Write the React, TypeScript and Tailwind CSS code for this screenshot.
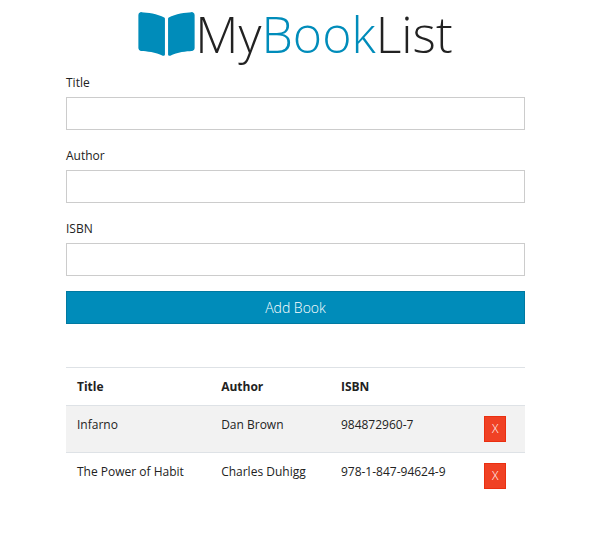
import { useState, type FormEvent } from "react";
import { FaBookOpen } from "react-icons/fa";

type Book = { title: string; author: string; isbn: string };

const initialBooks: Book[] = [
  { title: "Infarno", author: "Dan Brown", isbn: "984872960-7" },
  { title: "The Power of Habit", author: "Charles Duhigg", isbn: "978-1-847-94624-9" },
];

const emptyBook: Book = { title: "", author: "", isbn: "" };

type FieldProps = { id: string; label: string; value: string; onChange: (value: string) => void };

function Field({ id, label, value, onChange }: FieldProps) {
  return (
    <div>
      <label htmlFor={id} className="mb-1 block leading-5">
        {label}
      </label>
      <input
        id={id}
        type="text"
        value={value}
        onChange={(event) => onChange(event.target.value)}
        className="block h-[33px] w-full border border-[#ccc] bg-white px-3 outline-none focus:border-[#3bceff]"
      />
    </div>
  );
}

export default function App() {
  const [books, setBooks] = useState(initialBooks);
  const [draft, setDraft] = useState(emptyBook);

  const addBook = (event: FormEvent) => {
    event.preventDefault();
    if (!draft.title || !draft.author || !draft.isbn) return;
    setBooks([...books, draft]);
    setDraft(emptyBook);
  };

  return (
    <main className="mx-auto w-full max-w-[490px] pt-1 pr-[18px] pl-[13px] font-['Open_Sans',sans-serif] text-xs text-[#222]">
      <h1 className="mb-[9px] flex items-center justify-center text-[50px] leading-[60px] font-light">
        <FaBookOpen className="h-[50px] w-[57px] text-[#008cba]" aria-hidden="true" />
        <span>
          My<span className="text-[#008cba]">Book</span>List
        </span>
      </h1>

      <form onSubmit={addBook}>
        <div className="flex flex-col gap-4">
          <Field id="title" label="Title" value={draft.title} onChange={(title) => setDraft({ ...draft, title })} />
          <Field id="author" label="Author" value={draft.author} onChange={(author) => setDraft({ ...draft, author })} />
          <Field id="isbn" label="ISBN" value={draft.isbn} onChange={(isbn) => setDraft({ ...draft, isbn })} />
        </div>
        <button
          type="submit"
          className="mt-[15px] block h-[33px] w-full border border-[#0079a1] bg-[#008cba] text-sm font-light text-white"
        >
          Add Book
        </button>
      </form>

      <table className="mt-[43px] w-full table-fixed border-collapse text-left leading-[19px]">
        <colgroup>
          <col className="w-[31.4%]" />
          <col className="w-[26.1%]" />
          <col className="w-[31.2%]" />
          <col />
        </colgroup>
        <thead>
          <tr className="h-[38px] border-t border-[#dee2e6]">
            <th className="px-[11px] font-bold">Title</th>
            <th className="px-[11px] font-bold">Author</th>
            <th className="px-[11px] font-bold">ISBN</th>
            <th aria-label="Remove" />
          </tr>
        </thead>
        <tbody>
          {books.map((book, index) => (
            <tr key={index} className="h-[47px] border-t border-[#dee2e6] align-top odd:bg-[#f2f2f2]">
              <td className="px-[11px] pt-[9px]">{book.title}</td>
              <td className="px-[11px] pt-[9px]">{book.author}</td>
              <td className="px-[11px] pt-[9px]">{book.isbn}</td>
              <td className="px-[11px] pt-2.5">
                <button
                  type="button"
                  aria-label={`Remove ${book.title}`}
                  onClick={() => setBooks(books.filter((_, i) => i !== index))}
                  className="block h-[26px] w-[22px] border border-[#ea2f10] bg-[#f04124] text-xs font-light text-white"
                >
                  X
                </button>
              </td>
            </tr>
          ))}
        </tbody>
      </table>
    </main>
  );
}
